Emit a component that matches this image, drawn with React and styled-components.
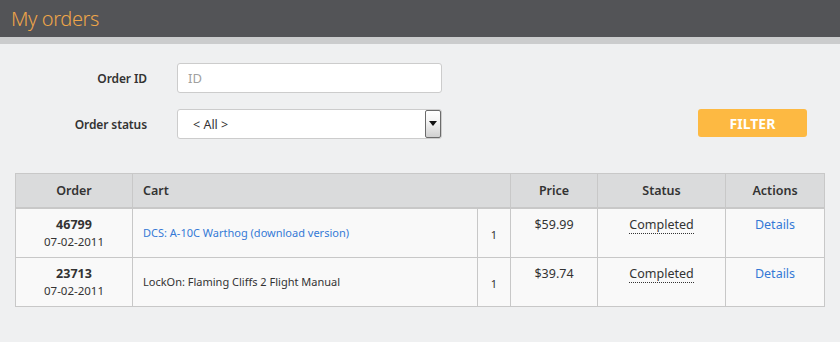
import React from "react";
import styled, { createGlobalStyle } from "styled-components";

const Global = createGlobalStyle`
  html, body {
    margin: 0;
    padding: 0;
    background: #eff0f1;
    font-family: "Noto Sans", "Open Sans", Arial, sans-serif;
    color: #333;
  }
`;

const orders = [
  {
    id: "46799",
    date: "07-02-2011",
    item: "DCS: A-10C Warthog (download version)",
    link: true,
    qty: 1,
    price: "$59.99",
    status: "Completed",
  },
  {
    id: "23713",
    date: "07-02-2011",
    item: "LockOn: Flaming Cliffs 2 Flight Manual",
    link: false,
    qty: 1,
    price: "$39.74",
    status: "Completed",
  },
];

const App = () => {
  return (
    <Page>
      <Global />
      <Header>
        <Title>My orders</Title>
      </Header>
      <Strip />
      <Content>
        <FilterArea>
          <Fields>
            <FieldRow>
              <Label>Order ID</Label>
              <Input placeholder="ID" />
            </FieldRow>
            <FieldRow>
              <Label>Order status</Label>
              <SelectBox>
                <span>&lt; All &gt;</span>
                <SelectArrow>
                  <svg width="8" height="5" viewBox="0 0 8 5">
                    <path d="M0 0 L8 0 L4 5 Z" fill="#111" />
                  </svg>
                </SelectArrow>
              </SelectBox>
            </FieldRow>
          </Fields>
          <FilterButton>FILTER</FilterButton>
        </FilterArea>

        <Table>
          <colgroup>
            <col style={{ width: 117 }} />
            <col style={{ width: 345 }} />
            <col style={{ width: 33 }} />
            <col style={{ width: 87 }} />
            <col style={{ width: 128 }} />
            <col />
          </colgroup>
          <thead>
            <tr>
              <Th>Order</Th>
              <Th colSpan={2} $left>
                Cart
              </Th>
              <Th>Price</Th>
              <Th>Status</Th>
              <Th>Actions</Th>
            </tr>
          </thead>
          <tbody>
            {orders.map((o) => (
              <tr key={o.id}>
                <Td $middle>
                  <OrderNo>{o.id}</OrderNo>
                  <OrderDate>{o.date}</OrderDate>
                </Td>
                <Td $middle $left>
                  {o.link ? <ItemLink>{o.item}</ItemLink> : o.item}
                </Td>
                <Td $middle>
                  <Qty>{o.qty}</Qty>
                </Td>
                <Td>
                  <Price>{o.price}</Price>
                </Td>
                <Td>
                  <Status>{o.status}</Status>
                </Td>
                <Td>
                  <Details>Details</Details>
                </Td>
              </tr>
            ))}
          </tbody>
        </Table>
      </Content>
    </Page>
  );
};
export default App;

const Page = styled.div`
  width: 840px;
  min-height: 342px;
  background: #eff0f1;
`;

const Header = styled.div`
  height: 37px;
  background: #535457;
  display: flex;
  align-items: center;
  padding-left: 11px;
`;

const Title = styled.h1`
  margin: 0;
  font-size: 20px;
  font-weight: 300;
  color: #eea549;
  letter-spacing: -0.4px;
`;

const Strip = styled.div`
  height: 7px;
  background: #cbcccd;
`;

const Content = styled.div`
  padding: 19px 16px 0 15px;
`;

const FilterArea = styled.div`
  display: flex;
  align-items: flex-end;
  justify-content: space-between;
  padding-right: 17px;
`;

const Fields = styled.div`
  display: flex;
  flex-direction: column;
  gap: 16px;
`;

const FieldRow = styled.div`
  display: flex;
  align-items: center;
`;

const Label = styled.label`
  width: 132px;
  text-align: right;
  padding-right: 30px;
  font-size: 12px;
  font-weight: 600;
  letter-spacing: -0.1px;
  color: #333;
`;

const Input = styled.input`
  box-sizing: border-box;
  width: 265px;
  height: 30px;
  border: 1px solid #cccccc;
  border-radius: 3px;
  background: #fff;
  padding: 0 10px;
  font-family: inherit;
  font-size: 13px;
  outline: none;
  &::placeholder {
    color: #a0a0a0;
  }
`;

const SelectBox = styled.div`
  box-sizing: border-box;
  width: 265px;
  height: 30px;
  border: 1px solid #cccccc;
  border-radius: 3px;
  background: #fff;
  display: flex;
  align-items: center;
  justify-content: space-between;
  padding-left: 15px;
  font-size: 12.5px;
  color: #333;
`;

const SelectArrow = styled.div`
  box-sizing: border-box;
  width: 16px;
  height: 28px;
  border: 1px solid #6b6b6b;
  border-radius: 2px;
  background: linear-gradient(#ffffff 0%, #f4f4f4 40%, #d0d0d0 100%);
  display: flex;
  justify-content: center;
  padding-top: 10px;
`;

const FilterButton = styled.button`
  width: 109px;
  height: 28px;
  margin-bottom: 2px;
  border: none;
  border-radius: 3px;
  background: #fdb942;
  color: #fff;
  font-family: inherit;
  font-size: 14px;
  font-weight: 700;
  cursor: pointer;
`;

const Table = styled.table`
  margin-top: 34px;
  width: 810px;
  border-collapse: collapse;
  table-layout: fixed;
  border: 1px solid #c8c8c8;
  font-size: 11px;
`;

const Th = styled.th`
  height: 33px;
  padding: 0 10px;
  background: #dadbdc;
  border: 1px solid #c8c8c8;
  border-bottom: 2px solid #c8c8c8;
  font-size: 12.5px;
  font-weight: 600;
  color: #333;
  text-align: ${(p) => (p.$left ? "left" : "center")};
`;

const Td = styled.td`
  height: 49px;
  padding: ${(p) => (p.$middle ? "0 10px" : "7px 10px 0")};
  box-sizing: border-box;
  background: #f9f9f9;
  border: 1px solid #c8c8c8;
  vertical-align: ${(p) => (p.$middle ? "middle" : "top")};
  text-align: ${(p) => (p.$left ? "left" : "center")};
  color: #333;
`;

const OrderNo = styled.div`
  font-size: 12.5px;
  font-weight: 700;
  line-height: 17px;
`;

const OrderDate = styled.div`
  font-size: 11.5px;
  line-height: 17px;
`;

const ItemLink = styled.a`
  color: #3579d6;
  text-decoration: none;
  cursor: pointer;
`;

const Qty = styled.span`
  display: inline-block;
  padding-top: 3px;
`;

const Price = styled.span`
  font-size: 12.5px;
`;

const Status = styled.span`
  font-size: 12.5px;
  border-bottom: 1px dotted #333;
`;

const Details = styled.a`
  font-size: 12.5px;
  color: #3579d6;
  cursor: pointer;
`;
